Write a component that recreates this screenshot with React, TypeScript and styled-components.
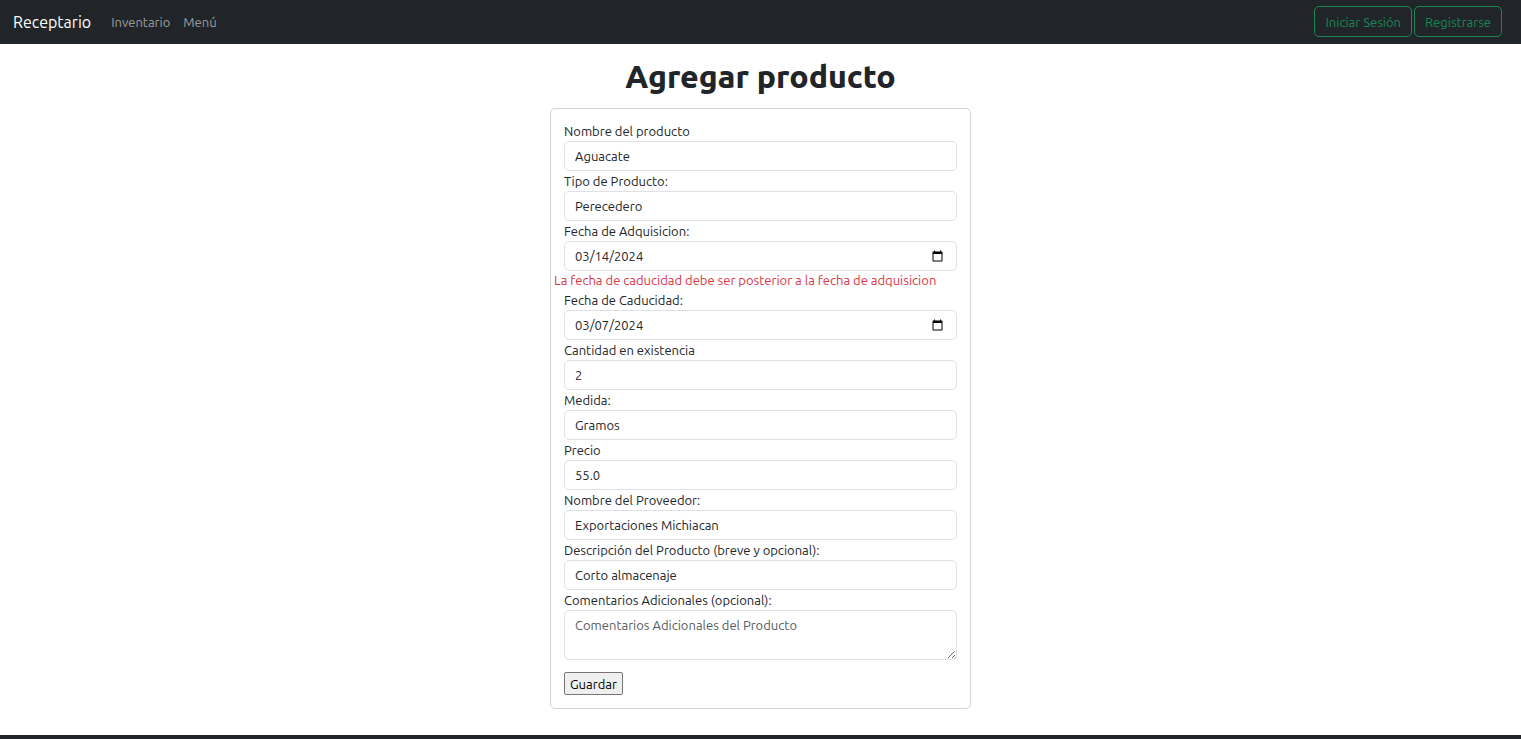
import React from "react";
import styled, { createGlobalStyle, css } from "styled-components";

const GlobalStyle = createGlobalStyle`
  *, *::before, *::after { box-sizing: border-box; }
  body {
    margin: 0;
    background: #fff;
    color: #212529;
    font-family: Ubuntu, "Noto Sans", sans-serif;
    font-size: 13px;
    line-height: 20px;
  }
  input, select, textarea, button { font: inherit; }
`;

const Page = styled.div`
  display: flex;
  flex-direction: column;
  min-height: 100vh;
`;

const Navbar = styled.nav`
  display: flex;
  align-items: center;
  min-height: 44px;
  padding: 6px 19px 7px 13px;
  background: #212529;
`;

const Brand = styled.a`
  margin-right: 14px;
  color: #fff;
  font-size: 16px;
  line-height: 24px;
  text-decoration: none;
`;

const NavLinks = styled.div`
  display: flex;
  flex: 1;
  gap: 1px;
`;

const NavLink = styled.a`
  padding: 5px 6px;
  color: rgba(255, 255, 255, 0.55);
  text-decoration: none;
`;

const NavActions = styled.div`
  display: flex;
  gap: 2px;
`;

const OutlineButton = styled.button`
  height: 31px;
  padding: 0 10px;
  border: 1px solid #198754;
  border-radius: 5px;
  background: transparent;
  color: #198754;
  cursor: pointer;
`;

const Main = styled.main`
  display: flex;
  flex: 1;
  flex-direction: column;
  align-items: center;
  padding: 13px 10px 26px;
`;

const Title = styled.h1`
  margin: 0 0 13px;
  font-size: 32px;
  font-weight: 800;
  line-height: 38px;
`;

const Card = styled.form`
  display: flex;
  flex-direction: column;
  width: 100%;
  max-width: 421px;
  padding: 12px 13px 13px;
  border: 1px solid #d3d3d4;
  border-radius: 5px;
`;

const Label = styled.label`
  display: block;
`;

const control = css`
  display: block;
  width: 100%;
  padding: 4px 10px;
  border: 1px solid #dee2e6;
  border-radius: 5px;
  background: #fff;
  color: #212529;
  appearance: none;
`;

const Input = styled.input`
  ${control}
  height: 30px;

  &::-webkit-datetime-edit-month-field,
  &::-webkit-datetime-edit-day-field,
  &::-webkit-datetime-edit-year-field {
    padding: 0;
  }
`;

const Select = styled.select`
  ${control}
  height: 30px;
`;

const TextArea = styled.textarea`
  ${control}
  height: 50px;
  resize: vertical;
  &::placeholder { color: #595c5f; opacity: 1; }
`;

const ErrorText = styled.p`
  margin: 0 -10px;
  color: #dc3545;
  line-height: 19px;
`;

const SaveButton = styled.button`
  align-self: flex-start;
  height: 23px;
  margin-top: 12px;
  padding: 0 5px;
  border: 1px solid #767676;
  border-radius: 2px;
  background: #efefef;
  color: #000;
  line-height: 20px;
`;

const Footer = styled.footer`
  height: 4px;
  background: #212529;
`;

type FieldProps = {
  id: string;
  label: string;
  value: string;
  type?: string;
  options?: string[];
};

function Field({ id, label, value, type = "text", options }: FieldProps) {
  return (
    <div>
      <Label htmlFor={id}>{label}</Label>
      {options ? (
        <Select id={id} name={id} defaultValue={value}>
          {options.map((option) => (
            <option key={option}>{option}</option>
          ))}
        </Select>
      ) : (
        <Input id={id} name={id} type={type} step={type === "number" ? "any" : undefined} defaultValue={value} />
      )}
    </div>
  );
}

export default function App() {
  return (
    <>
      <GlobalStyle />
      <Page>
        <Navbar>
          <Brand href="#">Receptario</Brand>
          <NavLinks>
            <NavLink href="#inventario">Inventario</NavLink>
            <NavLink href="#menu">Menú</NavLink>
          </NavLinks>
          <NavActions>
            <OutlineButton type="button">Iniciar Sesión</OutlineButton>
            <OutlineButton type="button">Registrarse</OutlineButton>
          </NavActions>
        </Navbar>
        <Main>
          <Title>Agregar producto</Title>
          <Card onSubmit={(event) => event.preventDefault()}>
            <Field id="nombre" label="Nombre del producto" value="Aguacate" />
            <Field id="tipo" label="Tipo de Producto:" value="Perecedero" options={["Perecedero"]} />
            <Field id="adquisicion" label="Fecha de Adquisicion:" value="2024-03-14" type="date" />
            <ErrorText role="alert">La fecha de caducidad debe ser posterior a la fecha de adquisicion</ErrorText>
            <Field id="caducidad" label="Fecha de Caducidad:" value="2024-03-07" type="date" />
            <Field id="cantidad" label="Cantidad en existencia" value="2" type="number" />
            <Field id="medida" label="Medida:" value="Gramos" options={["Gramos"]} />
            <Field id="precio" label="Precio" value="55.0" type="number" />
            <Field id="proveedor" label="Nombre del Proveedor:" value="Exportaciones Michiacan" />
            <Field id="descripcion" label="Descripción del Producto (breve y opcional):" value="Corto almacenaje" />
            <Label htmlFor="comentarios">Comentarios Adicionales (opcional):</Label>
            <TextArea id="comentarios" name="comentarios" placeholder="Comentarios Adicionales del Producto" />
            <SaveButton type="submit">Guardar</SaveButton>
          </Card>
        </Main>
        <Footer />
      </Page>
    </>
  );
}
